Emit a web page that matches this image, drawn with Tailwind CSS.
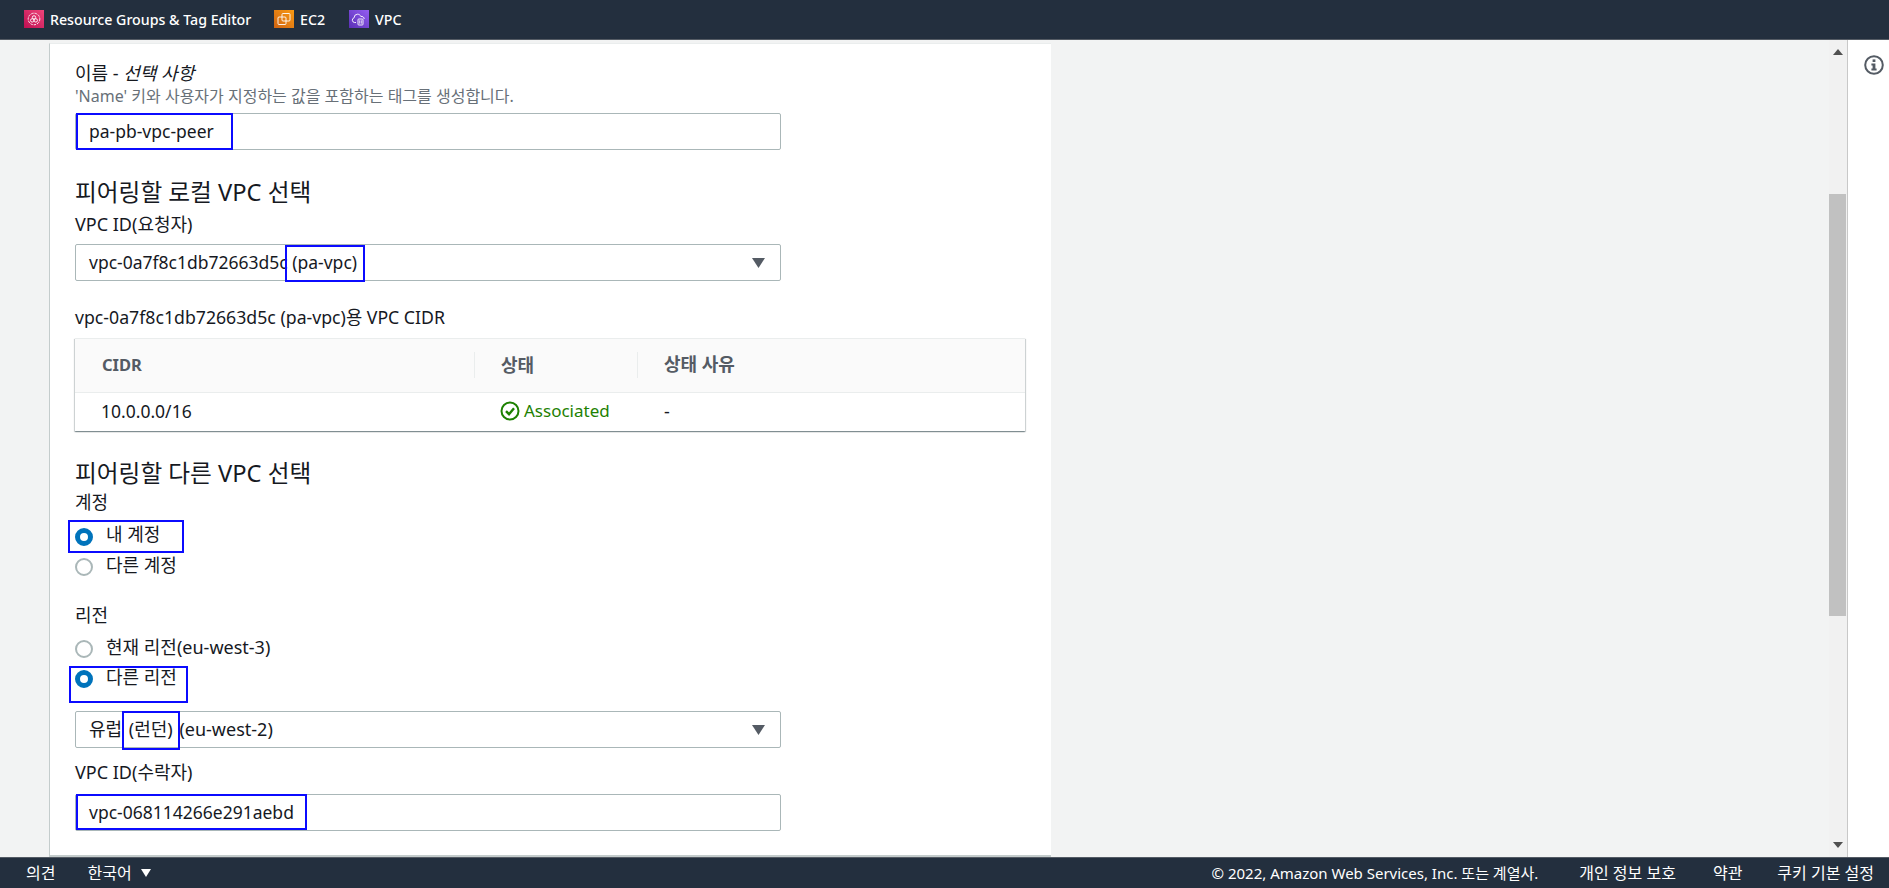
<!DOCTYPE html>
<html lang="ko">
<head>
  <meta charset="utf-8">
  <title>VPC 피어링 연결 생성</title>
  <script src="https://cdn.jsdelivr.net/npm/@tailwindcss/browser@4"></script>
</head>
<body class="font-['Noto_Sans','Noto_Sans_CJK_KR',sans-serif] text-[#16191f] text-[18px] overflow-hidden">
<div class="h-[888px] flex flex-col bg-[#f2f3f3]">

  <!-- Top service bar -->
  <header class="h-[40px] shrink-0 bg-[#232f3e] border-b border-[#545b64] flex items-center pl-[24px] text-white text-[14.2px] font-medium">
    <a class="flex items-center">
      <svg class="w-[20px] h-[18px]" viewBox="0 0 20 18">
        <defs><linearGradient id="rg" x1="0" y1="1" x2="1" y2="0"><stop offset="0" stop-color="#bd0f52"/><stop offset="1" stop-color="#f0457a"/></linearGradient></defs>
        <rect width="20" height="18" fill="url(#rg)"/>
        <circle cx="10" cy="9" r="5.8" fill="none" stroke="#fff" stroke-width="0.9" stroke-dasharray="2.4 1"/>
        <circle cx="10" cy="7.4" r="1.7" fill="none" stroke="#fff" stroke-width="0.9"/>
        <circle cx="8.2" cy="10.4" r="1.7" fill="none" stroke="#fff" stroke-width="0.9"/>
        <circle cx="11.8" cy="10.4" r="1.7" fill="none" stroke="#fff" stroke-width="0.9"/>
      </svg>
      <span class="ml-[6px] w-[224px]">Resource Groups &amp; Tag Editor</span>
    </a>
    <a class="flex items-center">
      <svg class="w-[20px] h-[18px]" viewBox="0 0 20 18">
        <defs><linearGradient id="ec" x1="0" y1="1" x2="1" y2="0"><stop offset="0" stop-color="#cf6413"/><stop offset="1" stop-color="#f99a13"/></linearGradient></defs>
        <rect width="20" height="18" fill="url(#ec)"/>
        <rect x="8" y="3.5" width="8" height="7.5" rx="1" fill="none" stroke="#fff" stroke-width="0.9"/>
        <rect x="4" y="7" width="8" height="7.5" rx="1" fill="none" stroke="#fff" stroke-width="0.9"/>
      </svg>
      <span class="ml-[6px] w-[49px]">EC2</span>
    </a>
    <a class="flex items-center">
      <svg class="w-[20px] h-[18px]" viewBox="0 0 20 18">
        <defs><linearGradient id="vp" x1="0" y1="1" x2="1" y2="0"><stop offset="0" stop-color="#5a30b5"/><stop offset="1" stop-color="#945df2"/></linearGradient></defs>
        <rect width="20" height="18" fill="url(#vp)"/>
        <path d="M7 12.5H5.5a2.4 2.4 0 0 1-.4-4.7 3.6 3.6 0 0 1 3.4-3.6c1.6 0 2.9 1 3.4 2.3a2.6 2.6 0 0 1 3.3 2.5" fill="none" stroke="#fff" stroke-width="0.9"/>
        <rect x="9" y="9" width="5" height="6" rx="0.8" fill="none" stroke="#fff" stroke-width="0.9"/>
        <path d="M10.7 10.3v3.4M12.3 10.3v3.4" stroke="#fff" stroke-width="0.8"/>
      </svg>
      <span class="ml-[6px]">VPC</span>
    </a>
  </header>

  <div class="flex-1 flex min-h-0">
    <!-- Scrolled content -->
    <main class="flex-1 pl-[49px] pt-[3px] min-w-0">
      <div class="relative w-[1002px] h-[814px] bg-white border-l border-t border-b-2 border-[#c4cccc] border-t-[#eaeded] pl-[25px] pt-[16px]">
        <div class="w-[706px]">
          <div class="h-[24px] leading-[26px]">이름 - <i>선택 사항</i></div>
          <div class="mt-[2px] h-[20px] leading-[20px] text-[16px] text-[#687078]">'Name' 키와 사용자가 지정하는 값을 포함하는 태그를 생성합니다.</div>
          <div class="mt-[7px] h-[37px] border border-[#aab7b8] rounded-[2px] px-[13px] leading-[35px] text-[17.5px]">pa-pb-vpc-peer</div>

          <h2 class="mt-[27px] h-[28px] leading-[30px] text-[23.7px]">피어링할 로컬 VPC 선택</h2>
          <div class="mt-[7px] h-[24px] leading-[24px]">VPC ID(요청자)</div>
          <div class="mt-[8px] h-[37px] border border-[#aab7b8] rounded-[2px] pl-[13px] pr-[15px] leading-[35px] flex justify-between items-center text-[17.5px]">
            <span>vpc-0a7f8c1db72663d5c (pa-vpc)</span>
            <svg class="w-[13px] h-[10px]" viewBox="0 0 13 10"><path d="M0 0H13L6.5 10Z" fill="#545b64"/></svg>
          </div>
          <div class="mt-[24px] h-[24px] leading-[24px] text-[17.7px]">vpc-0a7f8c1db72663d5c (pa-vpc)용 VPC CIDR</div>
        </div>

        <!-- CIDR table -->
        <div class="mt-[9px] w-[950px] shadow-[0_1px_1px_0_rgba(0,28,36,0.3),1px_1px_1px_0_rgba(0,28,36,0.15),-1px_1px_1px_0_rgba(0,28,36,0.15)]">
          <div class="h-[55px] bg-[#fafafa] border-t border-b border-[#eaeded] flex items-center font-bold text-[#545b64] pb-[2px]">
            <div class="w-[400px] pl-[27px] border-r border-[#eaeded] h-[26px] leading-[26px] text-[16.5px]">CIDR</div>
            <div class="w-[163px] pl-[26px] border-r border-[#eaeded] h-[26px] leading-[26px]">상태</div>
            <div class="pl-[26px]">상태 사유</div>
          </div>
          <div class="h-[38px] flex items-center pb-[2px]">
            <div class="w-[400px] pl-[26px] text-[17.5px]">10.0.0.0/16</div>
            <div class="w-[163px] pl-[25px] flex items-center text-[#1d8102] text-[17px]">
              <svg class="w-[20px] h-[20px] shrink-0" viewBox="0 0 20 20" fill="none" stroke="#1d8102" stroke-width="2"><circle cx="10" cy="10" r="8.5"/><path d="M6 10.2l3 3 5-6" stroke-width="2.4"/></svg>
              <span class="ml-[4px]">Associated</span>
            </div>
            <div class="pl-[26px]">-</div>
          </div>
        </div>

        <div class="w-[706px]">
          <h2 class="mt-[27px] h-[28px] leading-[30px] text-[23.7px]">피어링할 다른 VPC 선택</h2>
          <div class="mt-[5px] h-[24px] leading-[22px]">계정</div>
          <div class="mt-[7px] h-[30px] flex items-center">
            <span class="w-[18px] h-[18px] rounded-full border-[5px] border-[#0073bb] bg-white"></span>
            <span class="ml-[13px] -mt-[6px]">내 계정</span>
          </div>
          <div class="h-[30px] flex items-center">
            <span class="w-[18px] h-[18px] rounded-full border-2 border-[#aab7b8] bg-white"></span>
            <span class="ml-[13px] -mt-[4px]">다른 계정</span>
          </div>
          <div class="mt-[21px] h-[24px] leading-[24px]">리전</div>
          <div class="mt-[7px] h-[30px] flex items-center">
            <span class="w-[18px] h-[18px] rounded-full border-2 border-[#aab7b8] bg-white"></span>
            <span class="ml-[13px] -mt-[4px]">현재 리전(eu-west-3)</span>
          </div>
          <div class="h-[30px] flex items-center">
            <span class="w-[18px] h-[18px] rounded-full border-[5px] border-[#0073bb] bg-white"></span>
            <span class="ml-[13px] -mt-[4px]">다른 리전</span>
          </div>
          <div class="mt-[17px] h-[37px] border border-[#aab7b8] rounded-[2px] pl-[13px] pr-[15px] leading-[35px] flex justify-between items-center">
            <span class="[word-spacing:2px]">유럽 (런던) (eu-west-2)</span>
            <svg class="w-[13px] h-[10px]" viewBox="0 0 13 10"><path d="M0 0H13L6.5 10Z" fill="#545b64"/></svg>
          </div>
          <div class="mt-[13px] h-[24px] leading-[22px]">VPC ID(수락자)</div>
          <div class="mt-[9px] h-[37px] border border-[#aab7b8] rounded-[2px] px-[13px] leading-[35px] text-[17.5px]">vpc-068114266e291aebd</div>
        </div>

        <!-- Blue annotation boxes drawn over the screenshot -->
        <div class="absolute left-[26px] top-[69px] w-[157px] h-[37px] border-2 border-[#0b0bff]"></div>
        <div class="absolute left-[235px] top-[201px] w-[80px] h-[37px] border-2 border-[#0b0bff]"></div>
        <div class="absolute left-[18px] top-[476px] w-[116px] h-[33px] border-2 border-[#0b0bff]"></div>
        <div class="absolute left-[19px] top-[622px] w-[119px] h-[37px] border-2 border-[#0b0bff]"></div>
        <div class="absolute left-[72px] top-[667px] w-[58px] h-[39px] border-2 border-[#0b0bff]"></div>
        <div class="absolute left-[26px] top-[750px] w-[231px] h-[36px] border-2 border-[#0b0bff]"></div>
      </div>
    </main>

    <!-- Scrollbar -->
    <div class="w-[19px] shrink-0 bg-[#f1f1f1] border-r border-[#c8c8c8] flex flex-col items-center justify-between pr-[1px] py-[9px]">
      <svg class="w-[10px] h-[6px]" viewBox="0 0 10 6"><path d="M0 6H10L5 0Z" fill="#505050"/></svg>
      <div class="w-[17px] h-[422px] bg-[#c1c1c1] mb-[219px] mt-[132px]"></div>
      <svg class="w-[10px] h-[6px]" viewBox="0 0 10 6"><path d="M0 0H10L5 6Z" fill="#505050"/></svg>
    </div>

    <!-- Right tools panel -->
    <aside class="w-[41px] shrink-0 bg-white flex justify-center pt-[15px] pl-[10px]">
      <svg class="w-[20px] h-[20px]" viewBox="0 0 20 20" fill="none">
        <circle cx="10" cy="10" r="8.8" stroke="#545b64" stroke-width="2"/>
        <rect x="8.6" y="4.4" width="2.8" height="2.6" fill="#545b64"/>
        <path d="M7.4 8.6h4v5h1.2v2H7.4v-2h1.2v-3H7.4z" fill="#545b64"/>
      </svg>
    </aside>
  </div>

  <!-- Footer -->
  <footer class="h-[31px] shrink-0 bg-[#232f3e] border-t border-[#545b64] text-white text-[16px] flex items-center justify-between pl-[26px] pr-[15px]">
    <div class="flex items-center">
      <span>의견</span>
      <span class="ml-[32px]">한국어</span>
      <svg class="ml-[9px] w-[10px] h-[8px]" viewBox="0 0 10 8"><path d="M0 0H10L5 8Z" fill="#fff"/></svg>
    </div>
    <div class="flex items-center">
      <span class="text-[15px]">© 2022, Amazon Web Services, Inc. 또는 계열사.</span>
      <span class="ml-[41px]">개인 정보 보호</span>
      <span class="ml-[37px]">약관</span>
      <span class="ml-[35px]">쿠키 기본 설정</span>
    </div>
  </footer>
</div>
</body>
</html>
